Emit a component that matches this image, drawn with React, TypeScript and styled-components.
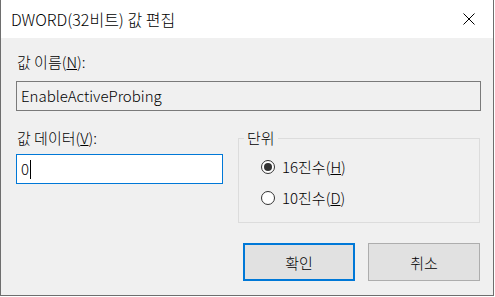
import styled, { createGlobalStyle } from "styled-components";

const GlobalStyle = createGlobalStyle`
  html, body {
    margin: 0;
    padding: 0;
    background: #ffffff;
  }
  body {
    font-family: "Noto Sans CJK KR", "Noto Sans", sans-serif;
    font-weight: 300;
    color: #000000;
  }
`;

export default function App() {
  return (
    <>
      <GlobalStyle />
      <Window>
        <TitleBar>
          <Title>DWORD(32비트) 값 편집</Title>
          <CloseButton aria-label="닫기">
            <svg width="12" height="12" viewBox="0 0 12 12">
              <path d="M0.5 0.5 L11.5 11.5 M11.5 0.5 L0.5 11.5" stroke="#000" strokeWidth="1" />
            </svg>
          </CloseButton>
        </TitleBar>

        <Body>
          <Label>
            값 이름(<u>N</u>):
          </Label>
          <ReadOnlyField>EnableActiveProbing</ReadOnlyField>

          <Columns>
            <DataColumn>
              <Label>
                값 데이터(<u>V</u>):
              </Label>
              <DataField>
                0<Caret />
              </DataField>
            </DataColumn>

            <GroupBox>
              <Legend>단위</Legend>
              <RadioRow>
                <Radio $checked />
                <span>
                  16진수(<u>H</u>)
                </span>
              </RadioRow>
              <RadioRow>
                <Radio />
                <span>
                  10진수(<u>D</u>)
                </span>
              </RadioRow>
            </GroupBox>
          </Columns>

          <ButtonRow>
            <Button $default>확인</Button>
            <Button>취소</Button>
          </ButtonRow>
        </Body>
      </Window>
    </>
  );
}

const Window = styled.div`
  width: 494px;
  height: 296px;
  box-sizing: border-box;
  border: 1px solid #6e6e6e;
  border-top: 0;
  background: #f0f0f0;
  display: flex;
  flex-direction: column;
`;

const TitleBar = styled.div`
  height: 38px;
  background: #ffffff;
  display: flex;
  align-items: center;
  justify-content: space-between;
  padding-left: 10px;
`;

const Title = styled.span`
  font-size: 16px;
  line-height: 20px;
`;

const CloseButton = styled.div`
  width: 48px;
  height: 38px;
  display: flex;
  align-items: center;
  justify-content: center;
`;

const Body = styled.div`
  padding: 14px 12px 0 15px;
  display: flex;
  flex-direction: column;
`;

const Label = styled.div`
  font-size: 15px;
  line-height: 20px;
  padding-left: 1px;
`;

const ReadOnlyField = styled.div`
  margin-top: 9px;
  height: 30px;
  box-sizing: border-box;
  border: 1px solid #7a7a7a;
  background: #f0f0f0;
  font-size: 15px;
  line-height: 28px;
  padding-left: 4px;
`;

const Columns = styled.div`
  margin-top: 17px;
  display: flex;
  gap: 15px;
  padding-right: 1px;
`;

const DataColumn = styled.div`
  width: 207px;
  display: flex;
  flex-direction: column;
`;

const DataField = styled.div`
  margin-top: 6px;
  height: 30px;
  box-sizing: border-box;
  border: 1px solid #0078d7;
  background: #ffffff;
  font-size: 15px;
  line-height: 28px;
  padding-left: 4px;
  display: flex;
  align-items: center;
`;

const Caret = styled.span`
  display: inline-block;
  width: 1px;
  height: 19px;
  background: #000000;
  margin-left: 1px;
`;

const GroupBox = styled.fieldset`
  flex: 1;
  margin: 0;
  height: 95px;
  box-sizing: border-box;
  border: 1px solid #dcdcdc;
  padding: 9px 0 0 0;
  display: flex;
  flex-direction: column;
  gap: 11px;
`;

const Legend = styled.legend`
  font-size: 15px;
  line-height: 20px;
  padding: 0 3px;
  margin-left: 5px;
`;

const RadioRow = styled.label`
  display: flex;
  align-items: center;
  gap: 7px;
  padding-left: 22px;
  font-size: 15px;
  line-height: 20px;
`;

const Radio = styled.span<{ $checked?: boolean }>`
  width: 14px;
  height: 14px;
  box-sizing: border-box;
  border-radius: 50%;
  border: 1px solid #333333;
  background: #ffffff;
  display: flex;
  align-items: center;
  justify-content: center;

  &::after {
    content: "";
    display: ${(p) => (p.$checked ? "block" : "none")};
    width: 8px;
    height: 8px;
    border-radius: 50%;
    background: #333333;
  }
`;

const ButtonRow = styled.div`
  margin-top: 20px;
  display: flex;
  justify-content: flex-end;
  gap: 13px;
  padding-right: 1px;
`;

const Button = styled.div<{ $default?: boolean }>`
  width: 112px;
  height: 38px;
  box-sizing: border-box;
  background: #e1e1e1;
  border: ${(p) => (p.$default ? "2px solid #0078d7" : "1px solid #adadad")};
  display: flex;
  align-items: center;
  justify-content: center;
  font-size: 15px;
`;
